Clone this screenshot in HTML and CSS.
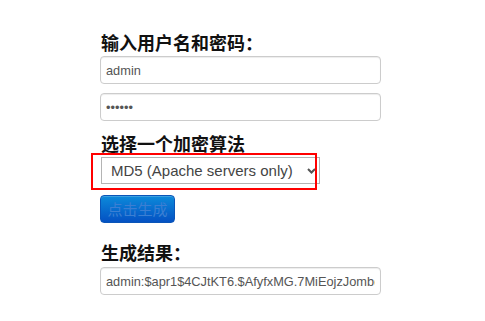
FILE: index.html
```html
<!DOCTYPE html>
<html lang="zh-CN">
<head>
<meta charset="utf-8">
<title>htpasswd 生成</title>
<link rel="stylesheet" href="styles.css">
</head>
<body>
<div class="page">
  <h3 class="label first">输入用户名和密码：</h3>
  <input class="field" type="text" value="admin">
  <input class="field second" type="password" value="123456">
  <h3 class="label mid">选择一个加密算法</h3>
  <div class="select-wrap">
    <select class="algo">
      <option>MD5 (Apache servers only)</option>
      <option>SHA-1</option>
      <option>Crypt (all Unix servers)</option>
    </select>
    <svg class="chev" width="9" height="6" viewBox="0 0 9 6"><path d="M1 1 L4.5 4.5 L8 1" fill="none" stroke="#555" stroke-width="2"/></svg>
    <div class="highlight"></div>
  </div>
  <button class="btn" type="button">点击生成</button>
  <h3 class="label result">生成结果：</h3>
  <input class="field" type="text" value="admin:$apr1$4CJtKT6.$AfyfxMG.7MiEojzJombd/">
</div>
</body>
</html>
```
FILE: styles.css
```css
html, body {
  margin: 0;
  padding: 0;
  background: #fff;
}
.page {
  padding: 32px 0 0 100px;
  width: 281px;
  display: flex;
  flex-direction: column;
  align-items: flex-start;
  font-family: "Liberation Sans", Arial, "Noto Sans CJK SC", sans-serif;
}
.label {
  margin: 0;
  font-family: "Noto Sans CJK SC", sans-serif;
  font-size: 18px;
  line-height: 20px;
  font-weight: 700;
  color: #111;
  padding-left: 1px;
}
.label.mid { margin-top: 12px; }
.label.result { margin-top: 19px; }
.field {
  box-sizing: border-box;
  width: 281px;
  height: 28px;
  margin: 4px 0 0 0;
  padding: 0 5px;
  border: 1px solid #ccc;
  border-radius: 4px;
  box-shadow: inset 0 1px 1px rgba(0,0,0,.075);
  font-family: "Liberation Sans", Arial, sans-serif;
  font-size: 12.8px;
  color: #555;
  background: #fff;
  outline: none;
}
.field.second { margin-top: 9px; }
.label.result + .field { margin-top: 5px; }
.select-wrap {
  position: relative;
  margin: 4px 0 0 1px;
  width: 219px;
  height: 27px;
}
.algo {
  -webkit-appearance: none;
  appearance: none;
  box-sizing: border-box;
  width: 219px;
  height: 27px;
  margin: 0;
  padding: 0 0 0 9px;
  border: 1px solid #b4b4b4;
  border-radius: 0;
  background: #fff;
  font-family: "Liberation Sans", Arial, sans-serif;
  font-size: 15px;
  color: #444;
  outline: none;
}
.chev {
  position: absolute;
  right: 4px;
  top: 11px;
  pointer-events: none;
}
.highlight {
  position: absolute;
  left: -10px;
  top: -4px;
  width: 226px;
  height: 37px;
  box-sizing: border-box;
  border: 2px solid #f00;
  pointer-events: none;
}
.btn {
  box-sizing: border-box;
  margin-top: 11px;
  width: 75px;
  height: 28px;
  padding: 0;
  border: 1px solid #0a55b8;
  border-radius: 4px;
  background: linear-gradient(#0c8ada, #0451c3);
  color: #3b7fd3;
  font-family: "Noto Sans CJK SC", sans-serif;
  font-size: 15px;
  line-height: 26px;
  box-shadow: inset 0 1px 0 rgba(255,255,255,.2);
}
```
